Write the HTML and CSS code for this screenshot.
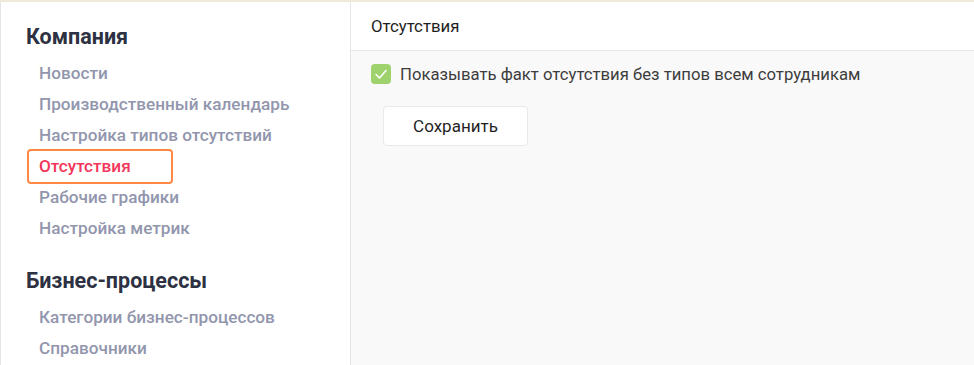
FILE: index.html
```html
<!DOCTYPE html>
<html>

<head>
    <meta charset="UTF-8">
    <title>Отсутствия</title>
    <link rel="stylesheet" href="styles.css">
</head>

<body>
    <div class="page">
        <div class="sidebar">
            <h3>Компания</h3>
            <ul class="menu">
                <li><a href="javascript:;">Новости</a></li>
                <li><a href="javascript:;">Производственный календарь</a></li>
                <li><a href="javascript:;">Настройка типов отсутствий</a></li>
                <li><a href="javascript:;" class="active">Отсутствия</a></li>
                <li><a href="javascript:;">Рабочие графики</a></li>
                <li><a href="javascript:;">Настройка метрик</a></li>
            </ul>
            <h3 class="second">Бизнес-процессы</h3>
            <ul class="menu">
                <li><a href="javascript:;">Категории бизнес-процессов</a></li>
                <li><a href="javascript:;">Справочники</a></li>
            </ul>
        </div>
        <div class="main">
            <div class="main-head">Отсутствия</div>
            <div class="main-body">
                <label class="check">
                    <span class="box">
                        <svg width="14" height="14" viewBox="0 0 14 14">
                            <polyline points="2,7.5 5.5,11 12,3.5" fill="none" stroke="#fff" stroke-width="1.6" stroke-linecap="round" stroke-linejoin="round" />
                        </svg>
                    </span>
                    Показывать факт отсутствия без типов всем сотрудникам
                </label>
                <button class="btn">Сохранить</button>
            </div>
        </div>
    </div>
</body>

</html>
```

FILE: styles.css
```css
* {
    margin: 0;
    padding: 0;
    box-sizing: border-box;
}

body {
    font-family: Roboto, "Noto Sans", sans-serif;
    background: #fff;
    border-top: 2px solid #efe9da;
    height: 365px;
    overflow: hidden;
}

.page {
    display: flex;
    height: 363px;
}

.sidebar {
    width: 351px;
    border-left: 1px solid #e6e6e6;
    border-right: 1px solid #e6e6e6;
    padding: 21px 0 0 25px;
}

.sidebar h3 {
    font-size: 21.5px;
    line-height: 28px;
    font-weight: 700;
    color: #2d3142;
    margin-bottom: 7px;
}

.sidebar h3.second {
    margin-top: 23px;
}

.menu {
    list-style: none;
}

.menu li {
    height: 31px;
}

.menu a {
    display: inline-block;
    padding-left: 13px;
    font-size: 17.2px;
    line-height: 31px;
    font-weight: 500;
    color: #9296ad;
    text-decoration: none;
}

.menu a.active {
    color: #f33659;
    width: 142px;
    margin-left: 3px;
    padding-left: 10px;
    outline: 2px solid #ff8845;
    border-radius: 2px;
}

.main {
    flex: 1;
    display: flex;
    flex-direction: column;
}

.main-head {
    height: 49px;
    line-height: 48px;
    padding-left: 20px;
    font-size: 16.8px;
    color: #1f1f1f;
    border-bottom: 1px solid #e8e8e8;
}

.main-body {
    flex: 1;
    background: #f9f9f9;
    padding: 13px 20px 0;
}

.check {
    display: flex;
    align-items: center;
    gap: 9px;
    height: 20px;
    font-size: 16.7px;
    color: #3d3d3d;
}

.check .box {
    width: 20px;
    height: 20px;
    border-radius: 4px;
    background: #9ed26c;
    display: flex;
    align-items: center;
    justify-content: center;
}

.btn {
    display: block;
    margin: 22px 0 0 12px;
    width: 145px;
    height: 40px;
    background: #fff;
    border: 1px solid #e9e9e9;
    border-radius: 4px;
    font-family: Roboto, "Noto Sans", sans-serif;
    font-size: 17px;
    color: #1f1f1f;
}
```
